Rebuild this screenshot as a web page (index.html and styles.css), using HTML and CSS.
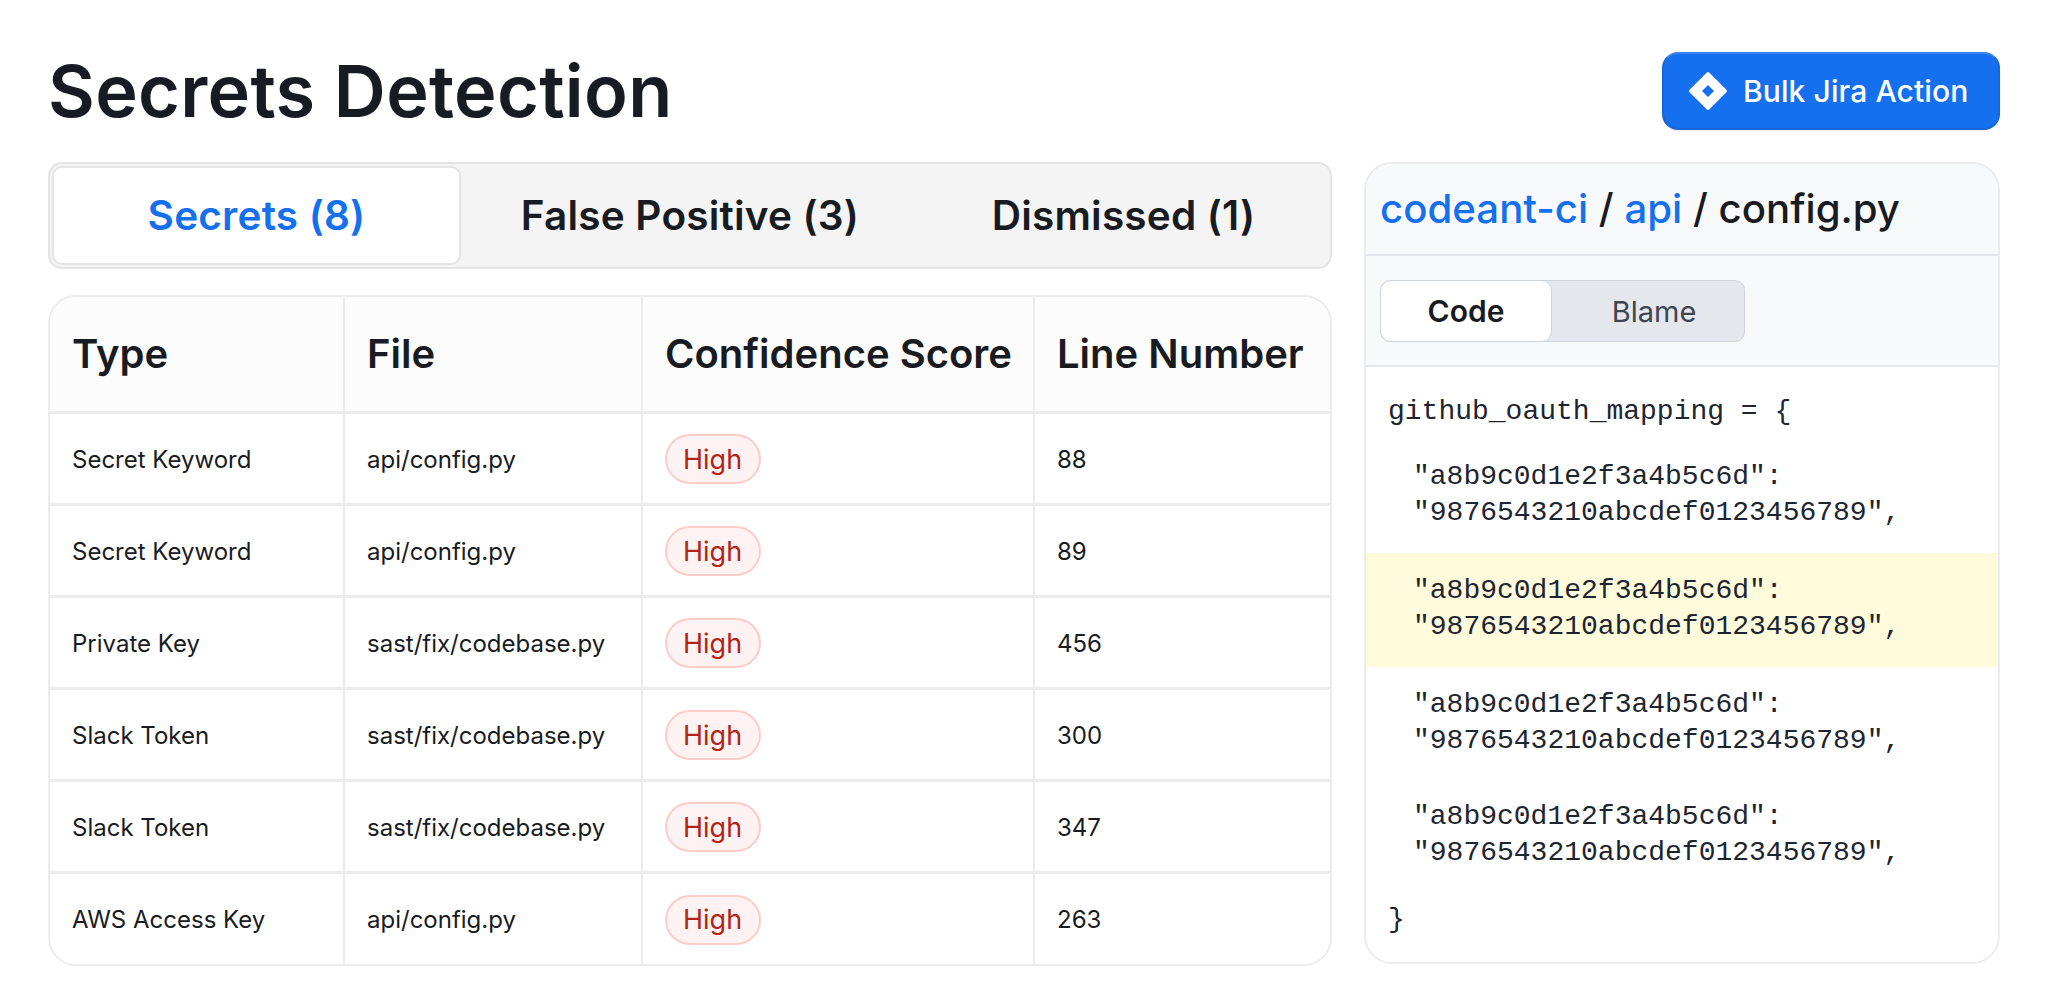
FILE: index.html
```html
<!DOCTYPE html>
<html lang="en">
<head>
<meta charset="utf-8">
<title>Secrets Detection</title>
<link rel="stylesheet" href="styles.css">
</head>
<body>
<div class="page">
  <header class="top">
    <h1 class="title">Secrets Detection</h1>
    <button class="jira-btn" type="button">
      <svg class="jira-icon" viewBox="0 0 38 38" aria-hidden="true"><path fill-rule="evenodd" fill="#fff" d="M17.6 .8a2 2 0 0 1 2.8 0l16.8 16.8a2 2 0 0 1 0 2.8L20.4 37.2a2 2 0 0 1-2.8 0L.8 20.400a2 2 0 0 1 0-2.8ZM19 13 13 19l6 6 6-6Z"/></svg>
      <span class="jira-label">Bulk Jira Action</span>
    </button>
  </header>
  <main class="columns">
    <section class="left">
      <nav class="tabs">
        <div class="tab tab-active">Secrets (8)</div>
        <div class="tab">False Positive (3)</div>
        <div class="tab">Dismissed (1)</div>
      </nav>
      <div class="table-wrap">
        <table class="grid">
          <colgroup><col class="c1"><col class="c2"><col class="c3"><col class="c4"></colgroup>
          <thead>
            <tr><th>Type</th><th>File</th><th>Confidence Score</th><th>Line Number</th></tr>
          </thead>
          <tbody>
            <tr><td>Secret Keyword</td><td>api/config.py</td><td><span class="pill">High</span></td><td>88</td></tr>
            <tr><td>Secret Keyword</td><td>api/config.py</td><td><span class="pill">High</span></td><td>89</td></tr>
            <tr><td>Private Key</td><td>sast/fix/codebase.py</td><td><span class="pill">High</span></td><td>456</td></tr>
            <tr><td>Slack Token</td><td>sast/fix/codebase.py</td><td><span class="pill">High</span></td><td>300</td></tr>
            <tr><td>Slack Token</td><td>sast/fix/codebase.py</td><td><span class="pill">High</span></td><td>347</td></tr>
            <tr><td>AWS Access Key</td><td>api/config.py</td><td><span class="pill">High</span></td><td>263</td></tr>
          </tbody>
        </table>
      </div>
    </section>
    <aside class="viewer">
      <div class="crumbs"><a class="crumb-link">codeant-ci</a> / <a class="crumb-link">api</a> / config.py</div>
      <div class="viewer-bar">
        <div class="seg">
          <div class="seg-item seg-active">Code</div>
          <div class="seg-item seg-idle">Blame</div>
        </div>
      </div>
      <div class="code">
        <div class="code-line code-open">github_oauth_mapping = {</div>
        <div class="entry entry-first"><div>"a8b9c0d1e2f3a4b5c6d":</div><div>"9876543210abcdef0123456789",</div></div>
        <div class="entry entry-hl"><div>"a8b9c0d1e2f3a4b5c6d":</div><div>"9876543210abcdef0123456789",</div></div>
        <div class="entry"><div>"a8b9c0d1e2f3a4b5c6d":</div><div>"9876543210abcdef0123456789",</div></div>
        <div class="entry"><div>"a8b9c0d1e2f3a4b5c6d":</div><div>"9876543210abcdef0123456789",</div></div>
        <div class="code-line code-close">}</div>
      </div>
    </aside>
  </main>
</div>
</body>
</html>
```

FILE: styles.css
```css
* { box-sizing: border-box; }
html, body { margin: 0; padding: 0; background: #fff; }
body { font-family: Inter, "Liberation Sans", sans-serif; color: #181b22; }
.page { padding: 52px 48px 0; }
.top { display: flex; justify-content: space-between; align-items: flex-start; height: 110px; }
.title { margin: 0; font-size: 72px; line-height: 78px; font-weight: 600; letter-spacing: 0.3px; }
.jira-btn {
  display: flex; align-items: center; gap: 16px;
  width: 338px; height: 78px; padding: 0 25px;
  background: #1570ef; color: #fff;
  border: 2px solid #1a66d6; border-top-color: #3b82ea; border-radius: 16px;
  font: 500 30px/1 Inter, sans-serif; letter-spacing: 0.1px; box-shadow: 0 1px 3px rgba(16,24,40,.08);
}
.jira-label { white-space: nowrap; }
.jira-icon { width: 38px; height: 38px; flex: none; }
.columns { display: grid; grid-template-columns: 1284px 636px; column-gap: 32px; align-items: start; }
.tabs {
  display: flex; height: 107px; padding: 2px;
  background: #f4f4f5; border: 2px solid #e4e4e7; border-radius: 14px;
}
.tab {
  flex: 1; display: flex; align-items: center; justify-content: center;
  font-size: 40.500px; font-weight: 600; letter-spacing: 0.2px; border: 2px solid transparent;
}
.tab:nth-child(1) { flex: 0 0 409px; }
.tab:nth-child(2) { flex: 0 0 458px; }
.tab-active { background: #fff; color: #1570ef; border-color: #e4e4e7; border-radius: 10px; }
.table-wrap { margin-top: 26px; border: 2px solid #ececee; border-radius: 28px; overflow: hidden; }
.grid { width: 100%; table-layout: fixed; border-collapse: collapse; }
.c1 { width: 294px; } .c2 { width: 298px; } .c3 { width: 392px; }
.grid th {
  height: 115px; padding: 0 22px; text-align: left;
  font-size: 40px; font-weight: 600; background: #fcfcfd;
  border-right: 2px solid #ececee; border-bottom: 3px solid #ececee; white-space: nowrap;
}
.grid td {
  height: 92px; padding: 2px 22px 0;
  font-size: 24px; font-weight: 400; color: #181b22;
  border-right: 2px solid #ececee; border-bottom: 3px solid #ececee;
}
.grid th:last-child, .grid td:last-child { border-right: 0; }
.grid tbody tr:last-child td { border-bottom: 0; }
.pill {
  display: inline-flex; align-items: center; height: 50px; padding: 0 17px 0 16px;
  background: #fef3f2; color: #b42318; border: 2px solid #fecdca; border-radius: 25px;
  font-size: 27px; font-weight: 400; vertical-align: middle;
}
.viewer { height: 802px; border: 2px solid #ececee; border-radius: 28px; overflow: hidden; background: #fff; }
.crumbs {
  height: 92px; padding: 0 14px; display: block; line-height: 90px;
  background: #f8f9fb; border-bottom: 2px solid #e4e7ec;
  font-size: 40.200px; font-weight: 500; color: #181b22;
}
.crumb-link { color: #1570ef; }
.viewer-bar { height: 111px; padding: 24px 14px 0; background: #f8f9fb; border-bottom: 2px solid #e4e7ec; }
.seg { display: flex; width: 365px; height: 62px; background: #e4e7ec; border: 1.500px solid #d0d5dd; border-radius: 10px; }
.seg-item { display: flex; align-items: center; justify-content: center; font-size: 29px; flex: 1; }
.seg-idle { color: #3f4550; padding-left: 12px; }
.seg-active { flex: 0 0 171px; background: #fff; color: #181b22; font-size: 30px; font-weight: 600; border-radius: 10px; border-right: 1.500px solid #d0d5dd; }
.code { font-family: "Liberation Mono", monospace; font-size: 28px; line-height: 36px; color: #1d2530; }
.code-line { padding-left: 22px; }
.code-open { padding-top: 27px; padding-bottom: 11px; }
.entry { padding: 20px 24px 20px 47px; height: 112px; }
.entry-first { padding-top: 18px; }
.entry-hl { background: #fefbdd; height: 114px; }
.code-close { padding-top: 11px; }
```
